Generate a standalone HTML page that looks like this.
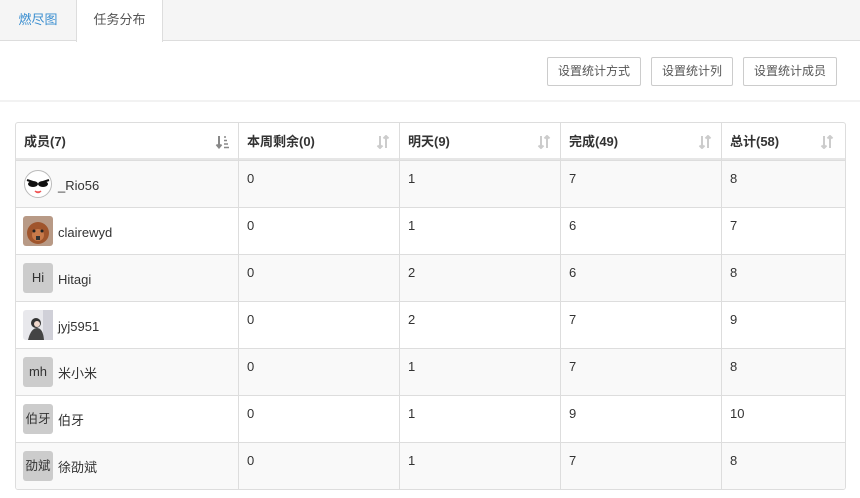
<!DOCTYPE html>
<html><head><meta charset="utf-8">
<style>
*{margin:0;padding:0;box-sizing:border-box}
body{width:860px;height:498px;background:#fff;font-family:"Liberation Sans","Noto Sans CJK SC",sans-serif;font-size:13px;line-height:16px;color:#333;position:relative;overflow:hidden}
.abs{position:absolute}
.tabbar{left:0;top:0;width:860px;height:41px;background:#f5f5f5;border-bottom:1px solid #ddd}
.tab{top:0;height:41px;line-height:40px;font-size:13px;text-align:center}
.btn{top:57px;height:29px;line-height:27px;border:1px solid #ccc;border-radius:2px;background:#fff;font-size:12px;color:#555;text-align:center}
.tbl{left:15px;top:122px;width:831px;height:368px;border:1px solid #ddd;border-radius:3px;overflow:hidden}
.hd{font-weight:bold;font-size:13px;color:#333;line-height:16px}
.vl{width:1px;background:#ddd;top:0;height:368px}
.row{left:0;width:831px;height:47px;border-top:1px solid #ddd}
.g{background:#f9f9f9}
.c{font-size:13px;color:#333;line-height:16px}
.av{left:7px;width:30px;height:30px;border-radius:3px;background:#ccc;text-align:center;line-height:30px;font-size:13px;color:#333;overflow:hidden}
.nm{left:42px;font-size:13px;line-height:16px}
</style></head><body>
<div class="abs tabbar"></div>
<div class="abs tab" style="left:0;width:76px;color:#3a8ed0">燃尽图</div>
<div class="abs tab" style="left:76px;width:87px;background:#fff;border-left:1px solid #ddd;border-right:1px solid #ddd;height:42px;color:#555">任务分布</div>
<div class="abs" style="left:0;top:100px;width:860px;height:2px;background:#f2f2f2"></div>
<div class="abs btn" style="left:547px;width:94px">设置统计方式</div>
<div class="abs btn" style="left:651px;width:82px">设置统计列</div>
<div class="abs btn" style="left:743px;width:94px">设置统计成员</div>

<div class="abs tbl">
  <div class="abs" style="left:0;top:35px;width:831px;height:3px;background:#e6e6e6"></div>
  <div class="abs hd" style="left:8px;top:11px">成员(7)</div>
  <div class="abs hd" style="left:231px;top:11px">本周剩余(0)</div>
  <div class="abs hd" style="left:392px;top:11px">明天(9)</div>
  <div class="abs hd" style="left:553px;top:11px">完成(49)</div>
  <div class="abs hd" style="left:714px;top:11px">总计(58)</div>
  <svg class="abs" style="left:199px;top:12px" width="16" height="14" viewBox="0 0 16 14"><path d="M4 1v11M1.5 9.5L4 12.5 6.5 9.5" stroke="#888" stroke-width="2" fill="none"/><path d="M9 2h2M9 5.5h3M9 9h4M9 12.5h5" stroke="#888" stroke-width="1.5"/></svg>
  <svg class="abs" style="left:360px;top:12px" width="14" height="14" viewBox="0 0 14 14"><g stroke="#ccc" stroke-width="2" fill="none"><path d="M4 1v12M1.5 10.5L4 13 6.5 10.5"/><path d="M10 13V1M7.5 3.5L10 1 12.5 3.5"/></g></svg>
  <svg class="abs" style="left:521px;top:12px" width="14" height="14" viewBox="0 0 14 14"><g stroke="#ccc" stroke-width="2" fill="none"><path d="M4 1v12M1.5 10.5L4 13 6.5 10.5"/><path d="M10 13V1M7.5 3.5L10 1 12.5 3.5"/></g></svg>
  <svg class="abs" style="left:682px;top:12px" width="14" height="14" viewBox="0 0 14 14"><g stroke="#ccc" stroke-width="2" fill="none"><path d="M4 1v12M1.5 10.5L4 13 6.5 10.5"/><path d="M10 13V1M7.5 3.5L10 1 12.5 3.5"/></g></svg>
  <svg class="abs" style="left:804px;top:12px" width="14" height="14" viewBox="0 0 14 14"><g stroke="#ccc" stroke-width="2" fill="none"><path d="M4 1v12M1.5 10.5L4 13 6.5 10.5"/><path d="M10 13V1M7.5 3.5L10 1 12.5 3.5"/></g></svg>

  <div class="abs row g" style="top:37px"></div>
  <div class="abs row" style="top:84px"></div>
  <div class="abs row g" style="top:131px"></div>
  <div class="abs row" style="top:178px"></div>
  <div class="abs row g" style="top:225px"></div>
  <div class="abs row" style="top:272px"></div>
  <div class="abs row g" style="top:319px"></div>

  <div class="abs vl" style="left:222px"></div>
  <div class="abs vl" style="left:383px"></div>
  <div class="abs vl" style="left:544px"></div>
  <div class="abs vl" style="left:705px"></div>

  <svg class="abs" style="left:7px;top:46px" width="30" height="30" viewBox="0 0 30 30"><circle cx="15" cy="15" r="13.5" fill="#fff" stroke="#bbb"/><path d="M4 11l6 2M26 11l-6 2" stroke="#111" stroke-width="2"/><ellipse cx="10" cy="15" rx="5" ry="3" fill="#111"/><ellipse cx="20" cy="15" rx="5" ry="3" fill="#111"/><path d="M12 22q3 3 6 0" stroke="#e55" stroke-width="1.5" fill="#f99"/></svg>
  <div class="abs nm" style="top:55px">_Rio56</div>
  <svg class="abs" style="left:7px;top:93px" width="30" height="30" viewBox="0 0 30 30"><rect width="30" height="30" rx="3" fill="#b89a86"/><circle cx="15" cy="17" r="11" fill="#a0552c"/><circle cx="15" cy="19" r="6" fill="#c87a4a"/><circle cx="11" cy="15" r="1.5" fill="#222"/><circle cx="19" cy="15" r="1.5" fill="#222"/><rect x="13" y="20" width="4" height="4" fill="#333"/></svg>
  <div class="abs nm" style="top:102px">clairewyd</div>
  <div class="abs av" style="top:140px">Hi</div>
  <div class="abs nm" style="top:149px">Hitagi</div>
  <svg class="abs" style="left:7px;top:187px" width="30" height="30" viewBox="0 0 30 30"><rect width="30" height="30" rx="3" fill="#e8e8ec"/><rect x="20" y="0" width="10" height="30" fill="#d0d0d8"/><circle cx="13" cy="13" r="5" fill="#333"/><path d="M5 30q3-12 9-12t7 12z" fill="#444"/><circle cx="14" cy="14" r="3" fill="#f0d8cc"/></svg>
  <div class="abs nm" style="top:196px">jyj5951</div>
  <div class="abs av" style="top:234px">mh</div>
  <div class="abs nm" style="top:243px">米小米</div>
  <div class="abs av" style="top:281px;font-size:12.5px">伯牙</div>
  <div class="abs nm" style="top:290px">伯牙</div>
  <div class="abs av" style="top:328px;font-size:12.5px">劭斌</div>
  <div class="abs nm" style="top:337px">徐劭斌</div>

  <div class="abs c" style="left:231px;top:48px">0</div><div class="abs c" style="left:392px;top:48px">1</div><div class="abs c" style="left:553px;top:48px">7</div><div class="abs c" style="left:714px;top:48px">8</div>
  <div class="abs c" style="left:231px;top:95px">0</div><div class="abs c" style="left:392px;top:95px">1</div><div class="abs c" style="left:553px;top:95px">6</div><div class="abs c" style="left:714px;top:95px">7</div>
  <div class="abs c" style="left:231px;top:142px">0</div><div class="abs c" style="left:392px;top:142px">2</div><div class="abs c" style="left:553px;top:142px">6</div><div class="abs c" style="left:714px;top:142px">8</div>
  <div class="abs c" style="left:231px;top:189px">0</div><div class="abs c" style="left:392px;top:189px">2</div><div class="abs c" style="left:553px;top:189px">7</div><div class="abs c" style="left:714px;top:189px">9</div>
  <div class="abs c" style="left:231px;top:236px">0</div><div class="abs c" style="left:392px;top:236px">1</div><div class="abs c" style="left:553px;top:236px">7</div><div class="abs c" style="left:714px;top:236px">8</div>
  <div class="abs c" style="left:231px;top:283px">0</div><div class="abs c" style="left:392px;top:283px">1</div><div class="abs c" style="left:553px;top:283px">9</div><div class="abs c" style="left:714px;top:283px">10</div>
  <div class="abs c" style="left:231px;top:330px">0</div><div class="abs c" style="left:392px;top:330px">1</div><div class="abs c" style="left:553px;top:330px">7</div><div class="abs c" style="left:714px;top:330px">8</div>
</div>
</body></html>
